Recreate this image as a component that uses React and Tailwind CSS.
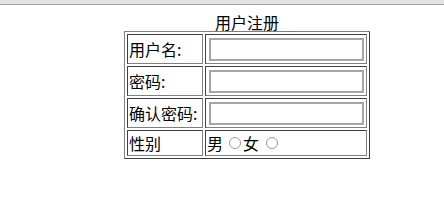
import React from 'react';

const font = { fontFamily: '"Noto Sans CJK SC", "Noto Sans", sans-serif' };

const Radio = ({ className = '' }) => (
  <span className={`inline-block h-[12px] w-[12px] shrink-0 rounded-full border border-[#9a9a9a] bg-white ${className}`} />
);

const Label = ({ children, h = 'h-[30px]' }) => (
  <div className={`flex ${h} w-[76px] shrink-0 items-center border border-t-[#404040] border-l-[#404040] border-b-[#808080] border-r-[#808080] pl-[1px] text-[16px] leading-[18px] whitespace-nowrap`}>
    {children}
  </div>
);

const InputCell = () => (
  <div className="flex h-[30px] w-[162px] shrink-0 items-center border border-t-[#404040] border-l-[#404040] border-b-[#808080] border-r-[#808080] pl-[3px]">
    <div className="h-[23px] w-[155px] border-2 border-[#a6a6a6] bg-white" />
  </div>
);

export default function App() {
  return (
    <div className="min-h-[203px] w-[444px] bg-white text-black" style={font}>
      <div className="h-[4px] bg-[#e2e2e2]" />
      <div className="h-[1px] bg-[#a4a4a4]" />

      <div className="ml-[124px] w-[246px]">
        <div className="mt-[8px] h-[18px] text-center text-[16px] leading-[18px]">用户注册</div>

        <div className="flex flex-col gap-[2px] border border-t-[#808080] border-l-[#808080] border-b-[#404040] border-r-[#404040] p-[2px]">
          <div className="flex gap-[2px]">
            <Label>用户名:</Label>
            <InputCell />
          </div>
          <div className="flex gap-[2px]">
            <Label>密码:</Label>
            <InputCell />
          </div>
          <div className="flex gap-[2px]">
            <Label>确认密码:</Label>
            <InputCell />
          </div>
          <div className="flex gap-[2px]">
            <Label h="h-[26px]">性别</Label>
            <div className="flex h-[26px] w-[162px] shrink-0 items-center border border-t-[#404040] border-l-[#404040] border-b-[#808080] border-r-[#808080] pl-[1px] text-[16px] leading-[18px]">
              <span>男</span>
              <Radio className="ml-[6px]" />
              <span className="ml-[2px]">女</span>
              <Radio className="ml-[7px]" />
            </div>
          </div>
        </div>
      </div>
    </div>
  );
}
